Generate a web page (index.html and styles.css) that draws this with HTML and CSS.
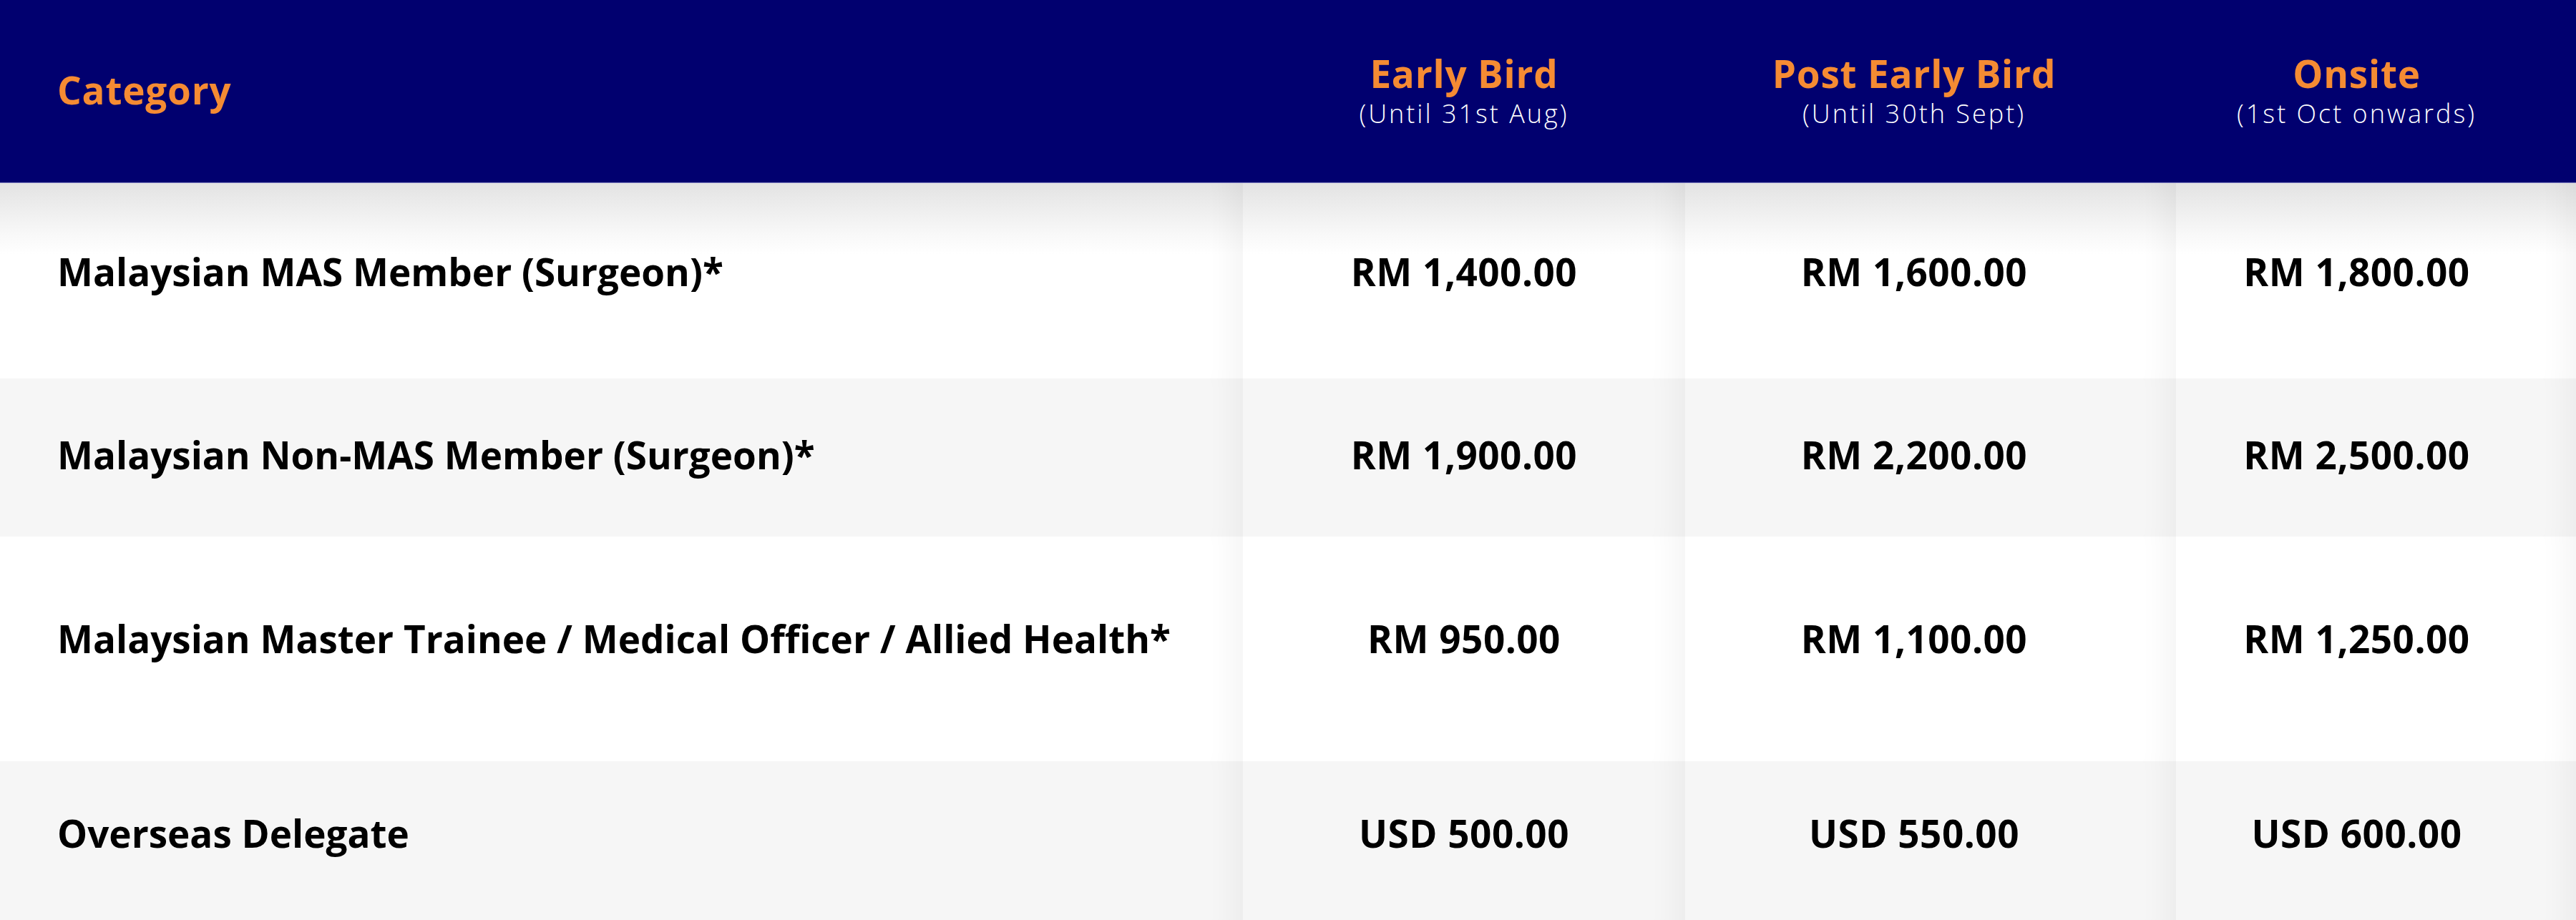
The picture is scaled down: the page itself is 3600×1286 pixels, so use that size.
FILE: index.html
```html
<!DOCTYPE html>
<html lang="en">
<head>
<meta charset="utf-8">
<title>Registration Fees</title>
<link rel="stylesheet" href="styles.css">
</head>
<body>
<div class="fees">
  <div class="row head">
    <div class="cell cat"><span class="title">Category</span></div>
    <div class="cell price c2"><span class="title">Early Bird</span><span class="sub">(Until 31st Aug)</span></div>
    <div class="cell price c3"><span class="title">Post Early Bird</span><span class="sub">(Until 30th Sept)</span></div>
    <div class="cell price c4"><span class="title">Onsite</span><span class="sub">(1st Oct onwards)</span></div>
  </div>
  <div class="row body r1">
    <div class="cell cat">Malaysian MAS Member (Surgeon)*</div>
    <div class="cell price c2">RM 1,400.00</div>
    <div class="cell price c3">RM 1,600.00</div>
    <div class="cell price c4">RM 1,800.00</div>
  </div>
  <div class="row body r2 alt">
    <div class="cell cat">Malaysian Non-MAS Member (Surgeon)*</div>
    <div class="cell price c2">RM 1,900.00</div>
    <div class="cell price c3">RM 2,200.00</div>
    <div class="cell price c4">RM 2,500.00</div>
  </div>
  <div class="row body r3">
    <div class="cell cat">Malaysian Master Trainee / Medical Officer / Allied Health*</div>
    <div class="cell price c2">RM 950.00</div>
    <div class="cell price c3">RM 1,100.00</div>
    <div class="cell price c4">RM 1,250.00</div>
  </div>
  <div class="row body r4 alt">
    <div class="cell cat">Overseas Delegate</div>
    <div class="cell price c2">USD 500.00</div>
    <div class="cell price c3">USD 550.00</div>
    <div class="cell price c4">USD 600.00</div>
  </div>
</div>
</body>
</html>
```

FILE: styles.css
```css
html, body {
  margin: 0;
  padding: 0;
  background: #ffffff;
}

.fees {
  width: 3600px;
  font-family: "Open Sans", "Noto Sans", sans-serif;
  color: #000000;
}

.row {
  display: grid;
  grid-template-columns: 1737px 618px 686px 559px;
}

.cell {
  display: flex;
  flex-direction: column;
  justify-content: center;
  box-sizing: border-box;
}

.cat {
  padding-left: 80px;
  text-align: left;
}

.price {
  align-items: center;
  text-align: center;
}

.c3 { padding-right: 46px; }
.c4 { padding-right: 54px; }

/* header */
.head {
  height: 256px;
  background: #01006f;
  border-bottom: 1px solid #8c8cc6;
  box-sizing: border-box;
}

.head .cat {
  padding-bottom: 4px;
}

.head .price {
  padding-top: 4px;
  padding-bottom: 8px;
}

.head .title {
  font-size: 53px;
  font-weight: 700;
  line-height: 66px;
  letter-spacing: 0.8px;
  color: #f58b33;
}

.head .sub {
  font-size: 36px;
  font-weight: 300;
  line-height: 46px;
  letter-spacing: 3px;
  color: #ffffff;
}

/* body rows */
.body .cell {
  font-size: 53px;
  font-weight: 700;
  line-height: 72px;
  box-shadow: inset -52px 0 40px -36px rgba(0, 0, 0, 0.045);
}

.body .price {
  letter-spacing: 0.5px;
}

.alt {
  background: #f6f6f6;
}

.r1 {
  height: 273px;
  background: linear-gradient(#e3e3e3 0px, #ececec 30px, #f8f8f8 70px, #ffffff 100px);
}
.r1 .cell { padding-bottom: 26px; }

.r2 { height: 221px; }
.r2 .cell { padding-bottom: 8px; }

.r3 { height: 314px; }
.r3 .cell { padding-bottom: 28px; }

.r4 { height: 232px; }
.r4 .cell { padding-bottom: 30px; }
```
